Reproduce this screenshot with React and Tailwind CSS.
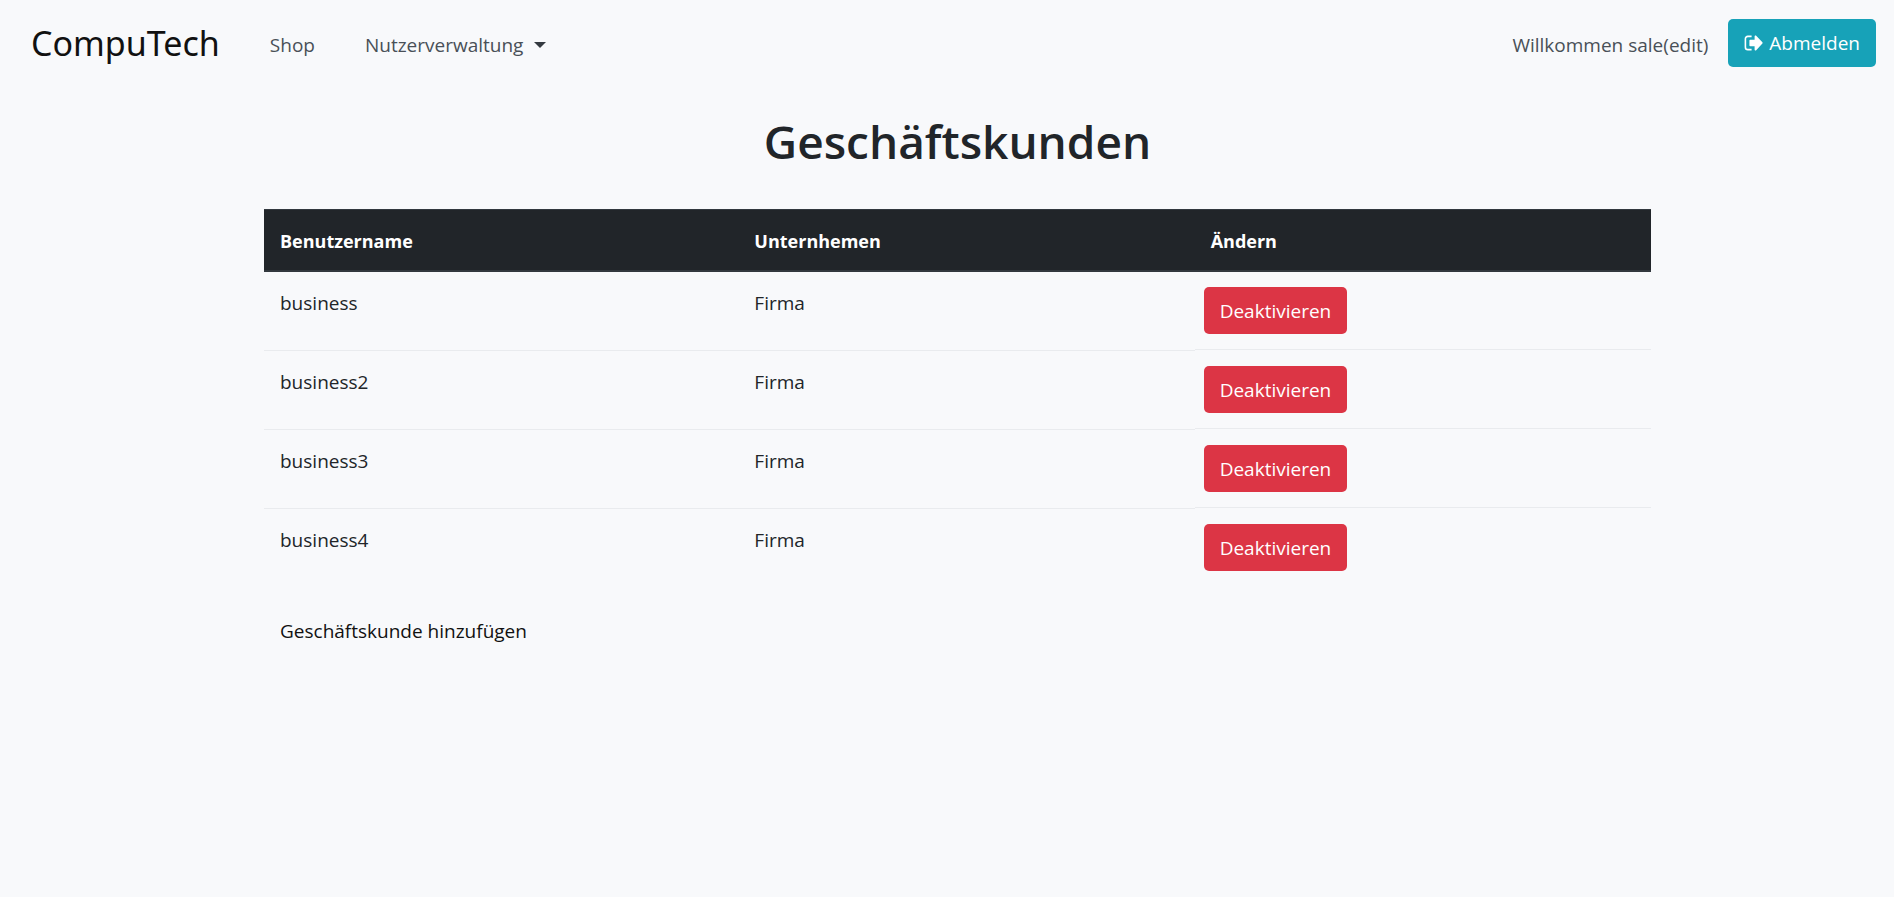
import React from "react";

const customers = [
  { name: "business", company: "Firma" },
  { name: "business2", company: "Firma" },
  { name: "business3", company: "Firma" },
  { name: "business4", company: "Firma" },
];

function LogoutIcon() {
  return (
    <svg className="h-4 w-[19px] shrink-0" viewBox="0 0 19 16" aria-hidden="true">
      <path
        d="M7.6 1.4H3.800A2.400 2.400 0 0 0 1.400 3.800v8.400a2.400 2.400 0 0 0 2.400 2.400H7.600"
        fill="none"
        stroke="currentColor"
        strokeWidth="1.6"
      />
      <path
        d="M10.6 1.4v3.400H6.200a.8.8 0 0 0-.8.8v4.800c0 .4.4.8.8.8h4.400v3.400c0 .9 1 1.300 1.600.7l6.200-6.700a1 1 0 0 0 0-1.300L12.200.7c-.6-.6-1.600-.2-1.600.7z"
        fill="currentColor"
      />
    </svg>
  );
}

function Navbar() {
  return (
    <nav className="flex items-center justify-between pt-[19px] pr-[18px] pl-[31px]">
      <div className="flex items-center gap-[50px]">
        <a href="#" className="font-['Noto_Sans',sans-serif] text-[34px] leading-[48px] text-[#111111]">
          CompuTech
        </a>
        <a href="#shop" className="pt-[3px] leading-[30px] text-[#495057]">
          Shop
        </a>
        <button type="button" className="flex items-center pt-[3px] leading-[30px] text-[#495057]">
          Nutzerverwaltung
          <span className="ml-[11px] border-x-[6px] border-t-[6px] border-x-transparent border-t-[#343a40]" />
        </button>
      </div>
      <div className="flex items-center gap-5">
        <span className="pt-[3px] leading-[30px] text-[#495057]">Willkommen sale(edit)</span>
        <button
          type="button"
          className="flex h-12 items-center gap-[6px] rounded-[5px] bg-[#17a2b8] px-4 text-white"
        >
          <LogoutIcon />
          Abmelden
        </button>
      </div>
    </nav>
  );
}

function CustomerTable() {
  return (
    <table className="mt-[38px] w-full table-fixed border-separate border-spacing-0 text-left">
      <colgroup>
        <col className="w-[34.2%]" />
        <col className="w-[32.9%]" />
        <col className="w-[32.9%]" />
      </colgroup>
      <thead className="bg-[#212529] text-white">
        <tr>
          {["Benutzername", "Unternhemen", "Ändern"].map((label) => (
            <th
              key={label}
              className="border-t border-b-2 border-[#32383e] px-4 pt-4 pb-[14px] text-[18px] leading-[30px] font-bold"
            >
              {label}
            </th>
          ))}
        </tr>
      </thead>
      <tbody className="align-top">
        {customers.map((customer, index) => {
          const first = index === 0;
          const last = index === customers.length - 1;
          const line = first ? "" : "border-t border-[#e9ebee]";
          return (
            <tr key={customer.name}>
              <td className={`px-4 pt-4 leading-[30px] ${line}`}>{customer.name}</td>
              <td className={`px-4 pt-4 leading-[30px] ${line}`}>{customer.company}</td>
              <td
                className={`px-[9px] py-[15px] ${first ? "" : "border-t border-t-transparent"} ${
                  last ? "" : "border-b border-b-[#e9ebee]"
                }`}
              >
                <button
                  type="button"
                  className="block h-[47px] rounded-[5px] bg-[#dc3545] px-4 leading-[30px] text-white"
                >
                  Deaktivieren
                </button>
              </td>
            </tr>
          );
        })}
      </tbody>
    </table>
  );
}

export default function App() {
  return (
    <div className="min-h-screen bg-[#f8f9fb] font-['Open_Sans',sans-serif] text-[19px] text-[#212529]">
      <Navbar />
      <main className="pt-11 pr-[243px] pl-[264px]">
        <h1 className="text-center text-[46px] leading-[60px] font-semibold">Geschäftskunden</h1>
        <CustomerTable />
        <a href="#neu" className="mt-[30px] ml-4 inline-block leading-[30px] text-[#111111]">
          Geschäftskunde hinzufügen
        </a>
      </main>
    </div>
  );
}
